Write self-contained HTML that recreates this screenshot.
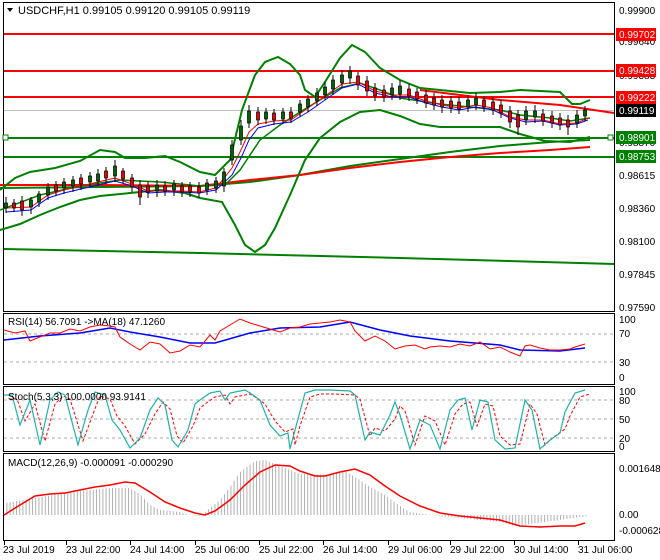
<!DOCTYPE html>
<html><head><meta charset="utf-8"><style>
html,body{margin:0;padding:0;background:#fff;width:660px;height:560px;overflow:hidden}
svg{display:block;font-family:"Liberation Sans",sans-serif}
</style></head><body>
<svg width="660" height="560" viewBox="0 0 660 560" xmlns="http://www.w3.org/2000/svg">
<defs>
<pattern id="hp" width="3.2" height="10" patternUnits="userSpaceOnUse"><rect x="0" y="0" width="1" height="10" fill="#b0b0b0"/></pattern>
</defs>
<rect width="660" height="560" fill="#fff"/>
<rect x="3.5" y="2.5" width="611" height="309" fill="none" stroke="#000"/>
<rect x="3.5" y="313.5" width="611" height="71" fill="none" stroke="#000"/>
<rect x="3.5" y="386.5" width="611" height="65" fill="none" stroke="#000"/>
<rect x="3.5" y="453.5" width="611" height="87" fill="none" stroke="#000"/>
<line x1="4" x2="614" y1="110.5" y2="110.5" stroke="#c0c0c0"/>
<g stroke="#f00" stroke-width="2"><line x1="4" x2="614" y1="34" y2="34"/><line x1="4" x2="614" y1="71" y2="71"/><line x1="4" x2="614" y1="97" y2="97"/></g>
<g stroke="#008000" stroke-width="2"><line x1="4" x2="614" y1="138" y2="138"/><line x1="4" x2="614" y1="157" y2="157"/></g>
<rect x="3" y="135" width="5" height="5" fill="#fff" stroke="#008000"/>
<rect x="608" y="135" width="5" height="5" fill="#fff" stroke="#008000"/>
<polyline fill="none" stroke="#008000" stroke-width="2" points="4,249 200,253 400,258 614,264"/>
<polyline fill="none" stroke="#f00" stroke-width="2" points="420,90 500,100 560,105 614,113"/>
<polyline fill="none" stroke="#008000" stroke-width="2" points="0,188 100,187 200,186 250,182 300,175 350,166 400,159 450,152 500,146 550,142 590,140"/>
<polyline fill="none" stroke="#f00" stroke-width="2" points="0,185 100,185 200,186 250,180 300,175 350,168 400,162 450,157 500,153 550,150 590,147"/>
<polyline fill="none" stroke="#008000" stroke-width="2" points="0,190 15,178 30,172 55,168 80,161 100,150 115,152 125,158 145,158 165,156 180,162 200,172 215,175 230,160 242,110 255,75 265,62 278,57 290,64 300,75 305,90 315,97 325,82 340,58 352,45 365,52 380,68 400,80 420,88 440,90 470,93 500,92 520,90 560,92 572,104 580,104 590,100"/>
<polyline fill="none" stroke="#008000" stroke-width="2" points="0,230 20,224 40,215 60,207 80,200 100,196 130,193 160,190 185,193 200,198 222,202 235,225 245,245 255,252 265,245 275,228 290,195 305,160 320,138 340,122 360,112 380,110 400,116 420,124 440,127 470,127 500,127 520,134 545,141 570,142 590,137"/>
<polyline fill="none" stroke="#008000" stroke-width="1.5" points="0,210 40,195 80,186 120,180 160,182 200,186 225,185 240,170 260,140 280,125 300,112 320,100 340,88 360,83 380,90 400,98 440,104 480,108 500,110 520,115 550,118 570,121 590,118"/>
<!-- price MAs -->
<polyline fill="none" stroke="#00f" stroke-width="1" points="6,212 31,210 48,198 64,193 81,189 98,185 115,181 132,186 148,193 165,192 182,192 199,193 216,190 232,175 241,158 249,140 258,128 274,124 291,122 308,112 325,100 342,88 358,84 375,93 392,97 409,97 426,103 442,107 459,110 476,107 493,110 510,118 526,122 543,121 560,125 577,124 588,120"/>
<polyline fill="none" stroke="#f00" stroke-width="1" points="6,208 31,207 48,195 64,190 81,186 98,182 115,178 132,184 148,191 165,191 182,191 199,192 216,188 232,168 241,150 249,132 258,124 274,121 291,120 308,108 325,96 342,84 358,82 375,91 392,95 409,95 426,101 442,105 459,108 476,105 493,108 510,117 526,120 543,120 560,124 577,123 588,118"/>
<!-- candles wicks -->
<path fill="none" stroke="#000" d="M6 197V213M14 199V212M22 196V216M31 197V214M39 191V207M48 183V200M56 181V196M64 178V194M73 176V192M81 174V190M90 172V187M98 169V186M106 167V184M115 160V182M123 168V183M132 174V192M140 180V205M148 181V198M157 180V197M165 181V196M174 180V196M182 182V197M190 182V197M199 182V198M207 179V195M216 177V193M224 168V192M232 140V165M241 120V145M249 105V128M258 107V125M266 108V124M274 109V125M283 108V124M291 107V123M300 100V117M308 95V112M317 88V106M325 82V100M333 75V95M342 70V88M350 66V84M358 72V90M367 76V96M375 83V101M384 85V102M392 83V100M400 80V100M409 84V101M417 88V104M426 90V108M434 93V110M442 95V113M451 96V113M459 97V114M468 95V112M476 93V110M484 96V112M493 97V115M501 100V118M510 106V128M518 110V135M526 106V125M535 105V123M543 109V126M552 111V128M560 113V130M568 115V135M577 110V128M585 106V121"/>
<g stroke="#000" stroke-width="0.7">
<g fill="#006400">
<rect x="4.5" y="203" width="3" height="5"/><rect x="29.5" y="200" width="3" height="7"/><rect x="37.5" y="194" width="3" height="8"/><rect x="46.5" y="187" width="3" height="8"/><rect x="62.5" y="182" width="3" height="6"/><rect x="71.5" y="180" width="3" height="6"/><rect x="88.5" y="176" width="3" height="6"/><rect x="96.5" y="174" width="3" height="7"/><rect x="113.5" y="166" width="3" height="10"/><rect x="155.5" y="185" width="3" height="6"/><rect x="172.5" y="184" width="3" height="6"/><rect x="205.5" y="183" width="3" height="7"/><rect x="214.5" y="181" width="3" height="7"/><rect x="222.5" y="172" width="3" height="14"/><rect x="230.5" y="145" width="3" height="15"/><rect x="239.5" y="126" width="3" height="14"/><rect x="247.5" y="111" width="3" height="12"/><rect x="264.5" y="112" width="3" height="7"/><rect x="281.5" y="112" width="3" height="7"/><rect x="298.5" y="104" width="3" height="8"/><rect x="306.5" y="99" width="3" height="8"/><rect x="315.5" y="93" width="3" height="8"/><rect x="323.5" y="87" width="3" height="8"/><rect x="331.5" y="80" width="3" height="9"/><rect x="340.5" y="75" width="3" height="8"/><rect x="348.5" y="71" width="3" height="7"/><rect x="390.5" y="88" width="3" height="7"/><rect x="398.5" y="86" width="3" height="8"/><rect x="466.5" y="100" width="3" height="7"/><rect x="474.5" y="98" width="3" height="7"/><rect x="524.5" y="111" width="3" height="9"/><rect x="533.5" y="111" width="3" height="6"/><rect x="575.5" y="115" width="3" height="8"/><rect x="583.5" y="110" width="3" height="6"/>
</g>
<g fill="#e00">
<rect x="12.5" y="203" width="3" height="5"/><rect x="20.5" y="201" width="3" height="9"/><rect x="54.5" y="185" width="3" height="6"/><rect x="79.5" y="178" width="3" height="6"/><rect x="104.5" y="171" width="3" height="7"/><rect x="121.5" y="171" width="3" height="8"/><rect x="130.5" y="178" width="3" height="9"/><rect x="138.5" y="185" width="3" height="12"/><rect x="146.5" y="186" width="3" height="6"/><rect x="163.5" y="186" width="3" height="5"/><rect x="180.5" y="186" width="3" height="6"/><rect x="188.5" y="186" width="3" height="6"/><rect x="197.5" y="187" width="3" height="6"/><rect x="256.5" y="112" width="3" height="8"/><rect x="272.5" y="113" width="3" height="7"/><rect x="289.5" y="112" width="3" height="6"/><rect x="356.5" y="76" width="3" height="9"/><rect x="365.5" y="81" width="3" height="10"/><rect x="373.5" y="88" width="3" height="8"/><rect x="382.5" y="90" width="3" height="7"/><rect x="407.5" y="89" width="3" height="7"/><rect x="415.5" y="92" width="3" height="7"/><rect x="424.5" y="95" width="3" height="8"/><rect x="432.5" y="98" width="3" height="7"/><rect x="440.5" y="100" width="3" height="7"/><rect x="449.5" y="101" width="3" height="7"/><rect x="457.5" y="102" width="3" height="7"/><rect x="482.5" y="100" width="3" height="7"/><rect x="491.5" y="102" width="3" height="8"/><rect x="499.5" y="105" width="3" height="8"/><rect x="508.5" y="111" width="3" height="11"/><rect x="516.5" y="115" width="3" height="12"/><rect x="541.5" y="114" width="3" height="7"/><rect x="550.5" y="116" width="3" height="7"/><rect x="558.5" y="118" width="3" height="7"/><rect x="566.5" y="120" width="3" height="7"/>
</g>
</g>
<path d="M7 8 L13 8 L10 12 Z" fill="#000"/>
<text x="18" y="14" font-size="11">USDCHF,H1  0.99105 0.99120 0.99105 0.99119</text>
<g font-size="10" fill="#000">
<text x="619" y="14">0.99900</text><text x="619" y="45">0.99640</text><text x="619" y="79">0.99383</text>
<text x="619" y="146">0.98870</text><text x="619" y="179">0.98615</text><text x="619" y="212">0.98360</text>
<text x="619" y="245">0.98100</text><text x="619" y="278">0.97845</text><text x="619" y="311">0.97590</text>
</g>
<rect x="616" y="28" width="40" height="13" fill="#f00"/><text x="619" y="38" font-size="10" fill="#fff">0.99702</text>
<rect x="616" y="64" width="40" height="13" fill="#f00"/><text x="619" y="74" font-size="10" fill="#fff">0.99428</text>
<rect x="616" y="91" width="40" height="13" fill="#f00"/><text x="619" y="101" font-size="10" fill="#fff">0.99222</text>
<rect x="616" y="104" width="40" height="13" fill="#000"/><text x="619" y="114" font-size="10" fill="#fff">0.99119</text>
<rect x="616" y="131" width="40" height="13" fill="#008000"/><text x="619" y="141" font-size="10" fill="#fff">0.98901</text>
<rect x="616" y="150" width="40" height="13" fill="#008000"/><text x="619" y="160" font-size="10" fill="#fff">0.98753</text>
<!-- RSI -->
<g stroke="#aaa" stroke-dasharray="3,3"><line x1="4" x2="614" y1="334" y2="334"/><line x1="4" x2="614" y1="362" y2="362"/></g>
<polyline fill="none" stroke="#00f" stroke-width="1.5" points="4,340 40,336 80,333 110,328 130,332 160,337 190,343 215,343 250,333 280,328 320,327 350,322 380,330 410,336 450,341 500,345 520,350 560,351 585,348"/>
<polyline fill="none" stroke="#f00" stroke-width="1" points="4,330 15,333 25,331 30,341 40,337 50,333 60,333 70,329 80,331 90,327 100,325 110,326 115,327 120,337 130,344 140,350 150,342 160,344 170,353 180,351 190,345 200,347 210,335 215,340 220,331 230,325 240,319 250,323 260,326 270,329 280,332 290,328 300,327 310,324 320,323 330,322 340,320 350,322 355,331 365,341 375,336 385,341 395,349 405,346 415,345 425,349 430,347 440,346 450,347 460,344 470,346 480,342 490,349 500,347 510,352 520,356 525,346 530,345 540,348 550,350 560,350 570,349 575,347 585,344"/>
<text x="8" y="325" font-size="10">RSI(14) 56.7091  -&gt;MA(18) 47.1260</text>
<g font-size="10"><text x="619" y="323">100</text><text x="619" y="337">70</text><text x="619" y="366">30</text><text x="619" y="381">0</text></g>
<!-- Stoch -->
<g stroke="#aaa" stroke-dasharray="3,3"><line x1="4" x2="614" y1="400" y2="400"/><line x1="4" x2="614" y1="419" y2="419"/><line x1="4" x2="614" y1="438" y2="438"/></g>
<polyline fill="none" stroke="#f00" stroke-width="1" stroke-dasharray="3,2" points="9,399 17,399 25,421 35,404 45,441 55,404 63,396 70,399 83,441 93,414 100,396 110,399 117,416 125,426 135,444 145,434 155,414 163,402 170,409 177,436 183,443 193,426 200,408 205,404 215,397 225,395 230,404 235,397 250,394 255,397 265,404 275,421 285,432 293,429 295,445 300,426 310,397 320,394 335,394 355,395 360,399 370,436 375,428 385,431 395,419 400,406 405,411 415,445 425,416 435,421 445,445 455,414 463,404 470,402 477,426 485,404 493,406 500,436 510,445 520,444 530,404 537,414 545,445 555,436 565,429 570,416 580,397 590,394"/>
<polyline fill="none" stroke="#20b2aa" stroke-width="1.2" points="4,395 12,395 20,425 30,400 40,445 50,400 58,392 65,395 78,445 88,410 95,392 105,395 112,420 120,430 130,448 140,438 150,410 158,398 165,405 172,440 178,447 188,430 195,404 200,400 210,393 220,391 225,400 230,393 245,390 250,393 260,400 270,425 280,436 288,433 290,449 295,430 305,393 315,390 330,390 350,391 355,395 365,440 370,432 380,435 390,415 395,402 400,415 410,449 420,420 430,425 440,449 450,410 458,400 465,398 472,430 480,400 488,402 495,440 505,449 515,448 525,400 532,410 540,449 550,440 560,433 565,412 575,393 585,390"/>
<text x="8" y="400" font-size="10">Stoch(5,3,3) 100.0000 93.9141</text>
<g font-size="10"><text x="619" y="395">100</text><text x="619" y="404">80</text><text x="619" y="423">50</text><text x="619" y="442">20</text><text x="619" y="450">0</text></g>
<!-- MACD -->
<polygon fill="url(#hp)" points="5,515 5,503 30,499 70,492 110,488 130,488 140,494 150,505 160,510 180,512 190,515 200,516 210,508 220,500 230,487 240,472 255,461 265,460 280,466 300,474 330,475 345,471 360,480 370,487 385,495 400,506 410,512 440,516 460,518 500,522 515,526 530,524 560,520 588,516 588,515"/>
<polyline fill="none" stroke="#f00" stroke-width="1.5" points="4,515 20,505 35,496 50,494 65,493 80,490 95,487 110,485 125,482 135,483 150,492 165,502 180,508 195,513 205,515 215,511 230,500 245,485 260,472 275,465 290,466 300,471 315,476 325,476 340,472 355,469 370,475 385,486 400,496 420,506 440,513 460,516 480,518 500,520 510,523 520,526 540,527 560,526 575,526 585,523"/>
<text x="8" y="466" font-size="10">MACD(12,26,9) -0.000091 -0.000290</text>
<g font-size="10"><text x="619" y="472">0.001648</text><text x="619" y="518">0.00</text><text x="619" y="534">-0.000628</text></g>
<path stroke="#000" d="M4.5 540V545M66.5 540V545M130.5 540V545M195.5 540V545M259.5 540V545M323.5 540V545M388.5 540V545M450.5 540V545M514.5 540V545M578.5 540V545"/>
<g font-size="10">
<text x="3" y="553">23 Jul 2019</text><text x="66" y="553">23 Jul 22:00</text><text x="130" y="553">24 Jul 14:00</text>
<text x="195" y="553">25 Jul 06:00</text><text x="259" y="553">25 Jul 22:00</text><text x="323" y="553">26 Jul 14:00</text>
<text x="388" y="553">29 Jul 06:00</text><text x="450" y="553">29 Jul 22:00</text><text x="514" y="553">30 Jul 14:00</text>
<text x="578" y="553">31 Jul 06:00</text>
</g>
</svg>
</body></html>
